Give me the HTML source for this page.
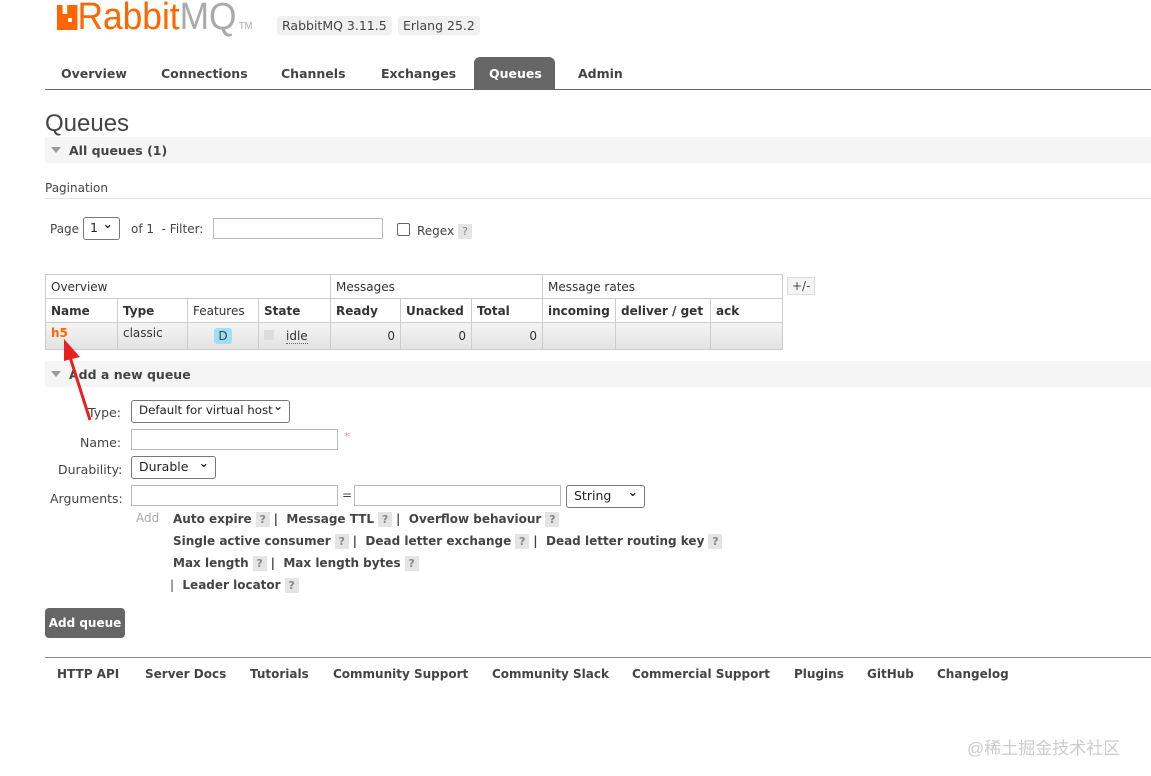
<!DOCTYPE html>
<html><head><meta charset="utf-8"><style>
*{margin:0;padding:0;box-sizing:border-box}
body{width:1151px;height:776px;background:#fff;font-family:"DejaVu Sans","Liberation Sans",sans-serif;font-size:12px;color:#444;position:relative;overflow:hidden}
.a{position:absolute;white-space:nowrap}
.b{font-weight:bold}
.tag{background:#f0f0f0;border-radius:3px;padding:2px 5px;font-size:12.5px;color:#444}
.nav{font-weight:bold;font-size:12.5px;color:#444}
.hl{position:absolute;height:1px;background:#ccc}
.sec{position:absolute;left:45px;width:1106px;height:26px;background:#f5f5f5}
.tri{display:inline-block;width:0;height:0;border-left:5px solid transparent;border-right:5px solid transparent;border-top:6px solid #999;margin-right:8px;vertical-align:2px}
table{border-collapse:collapse;position:absolute;left:45px;top:274px;font-size:12px;table-layout:fixed;width:737px}
td{border:1px solid #ccc;height:24px;padding:0 5px;color:#333;white-space:nowrap;overflow:hidden}
.q{display:inline-block;width:14px;height:15px;background:#e4e4e4;color:#888;font-size:11px;text-align:center;line-height:15px;margin:0 4px}
input.t{position:absolute;height:21px;border:1px solid #bbb;background:#fff}
.sel{position:absolute;border:1px solid #777;border-radius:3px;background:#fff;height:23px;font-size:12.5px;padding:2px 7px;color:#222;white-space:nowrap;overflow:hidden}
.sel:after{content:"⌄";position:absolute;right:6px;top:-2px;font-weight:bold}
.f{font-weight:bold;font-size:12.5px;color:#444}
</style></head><body>
<div class="a" style="left:57px;top:0px;font-family:'Liberation Sans',sans-serif;font-size:38px;color:#f60;line-height:34px;transform:scaleX(0.93);transform-origin:left">
<span style="display:inline-block;width:22px;height:25px;background:#f60;vertical-align:-1px;position:relative"><span style="position:absolute;left:6px;top:0;width:5px;height:9px;background:#fff"></span><span style="position:absolute;left:12px;top:13px;width:4px;height:4px;background:#fff"></span></span>Rabbit<span style="color:#aaa">MQ</span><span style="font-size:10px;color:#aaa"> TM</span></div>
<div class="a tag" style="left:277px;top:16px">RabbitMQ 3.11.5</div>
<div class="a tag" style="left:398px;top:16px">Erlang 25.2</div>
<div class="a nav" style="left:61px;top:66px">Overview</div>
<div class="a nav" style="left:161px;top:66px">Connections</div>
<div class="a nav" style="left:281px;top:66px">Channels</div>
<div class="a nav" style="left:381px;top:66px">Exchanges</div>
<div class="a" style="left:474px;top:57px;width:81px;height:32px;background:#666;border-radius:6px 6px 0 0"></div>
<div class="a nav" style="left:489px;top:66px;color:#fff">Queues</div>
<div class="a nav" style="left:578px;top:66px">Admin</div>
<div class="hl" style="left:45px;top:89px;width:1106px;background:#666"></div>
<div class="a" style="left:45px;top:110px;font-size:24px;color:#444;font-family:'Liberation Sans',sans-serif">Queues</div>
<div class="sec" style="top:137px"></div>
<div class="a b" style="left:51px;top:143px;font-size:12.5px"><span class="tri"></span>All queues (1)</div>
<div class="a" style="left:45px;top:181px">Pagination</div>
<div class="hl" style="left:45px;top:198px;width:1106px;background:#e4e4e4"></div>
<div class="a" style="left:50px;top:222px">Page</div>
<div class="sel" style="left:83px;top:217px;width:37px;padding:2px 6px">1</div>
<div class="a" style="left:131px;top:222px">of 1 &nbsp;- Filter:</div>
<input class="t" style="left:213px;top:218px;width:170px">
<div class="a" style="left:397px;top:223px;width:13px;height:13px;border:1px solid #666;border-radius:2px"></div>
<div class="a" style="left:417px;top:224px">Regex<span class="q">?</span></div>
<table>
<colgroup><col style="width:72px"><col style="width:70px"><col style="width:71px"><col style="width:72px"><col style="width:70px"><col style="width:71px"><col style="width:71px"><col style="width:73px"><col style="width:95px"><col style="width:72px"></colgroup>
<tr><td colspan="4">Overview</td><td colspan="3">Messages</td><td colspan="3">Message rates</td></tr>
<tr style="font-weight:bold"><td style="font-weight:bold">Name</td><td style="font-weight:bold">Type</td><td style="font-weight:normal">Features</td><td style="font-weight:bold">State</td><td style="font-weight:bold">Ready</td><td style="font-weight:bold">Unacked</td><td style="font-weight:bold">Total</td><td style="font-weight:bold">incoming</td><td style="font-weight:bold">deliver / get</td><td style="font-weight:bold">ack</td></tr>
<tr style="background:linear-gradient(#f4f4f4,#e2e2e2);height:27px"><td style="color:#f60;font-weight:bold;vertical-align:top;padding-top:3px">h5</td><td style="vertical-align:top;padding-top:3px">classic</td><td style="text-align:center"><span style="background:#9de0f5;border-radius:3px;padding:1px 4px;color:#444">D</span></td><td><span style="display:inline-block;width:10px;height:10px;background:#ddd;margin-right:12px"></span><span style="border-bottom:1px dotted #666">idle</span></td><td style="text-align:right">0</td><td style="text-align:right">0</td><td style="text-align:right">0</td><td></td><td></td><td></td></tr>
</table>
<div class="a" style="left:787px;top:277px;border:1px solid #ddd;padding:1px 4px;background:#f4f4f4">+/-</div>
<div class="sec" style="top:361px"></div>
<div class="a b" style="left:51px;top:367px;font-size:12.5px"><span class="tri"></span>Add a new queue</div>
<svg class="a" style="left:60px;top:335px" width="40" height="90"><line x1="30" y1="85" x2="10" y2="22" stroke="#e82020" stroke-width="3"/><polygon points="4,4 20,22 4,26" fill="#e82020"/></svg>
<div class="a" style="left:88px;top:405px;font-size:12.5px">Type:</div>
<div class="sel" style="left:131px;top:400px;width:159px;font-size:11.8px">Default for virtual host</div>
<div class="a" style="left:80px;top:435px;font-size:12.5px">Name:</div>
<input class="t" style="left:131px;top:429px;width:207px">
<div class="a" style="left:344px;top:430px;color:#e88;font-size:11px">*</div>
<div class="a" style="left:58px;top:462px;font-size:12.5px">Durability:</div>
<div class="sel" style="left:131px;top:456px;width:85px">Durable</div>
<div class="a" style="left:50px;top:491px;font-size:12.5px">Arguments:</div>
<input class="t" style="left:131px;top:485px;width:207px">
<div class="a" style="left:342px;top:488px">=</div>
<input class="t" style="left:354px;top:485px;width:207px">
<div class="sel" style="left:566px;top:485px;width:79px">String</div>
<div class="a" style="left:136px;top:511px;color:#aaa">Add</div>
<div class="a f" style="left:173px;top:512px;font-size:12px">Auto expire<span class="q">?</span>| &nbsp;Message TTL<span class="q">?</span>| &nbsp;Overflow behaviour<span class="q">?</span></div>
<div class="a f" style="left:173px;top:534px;font-size:12px">Single active consumer<span class="q">?</span>| &nbsp;Dead letter exchange<span class="q">?</span>| &nbsp;Dead letter routing key<span class="q">?</span></div>
<div class="a f" style="left:173px;top:556px;font-size:12px">Max length<span class="q">?</span>| &nbsp;Max length bytes<span class="q">?</span></div>
<div class="a f" style="left:170px;top:578px;font-size:12px"><span style="font-weight:normal">|</span> &nbsp;Leader locator<span class="q">?</span></div>
<div class="a" style="left:45px;top:608px;width:80px;height:30px;background:#666;border-radius:4px;color:#fff;font-weight:bold;font-size:12px;line-height:30px;text-align:center">Add queue</div>
<div class="hl" style="left:45px;top:657px;width:1106px;background:#888"></div>
<div class="a nav" style="left:57px;top:667px;font-size:12px">HTTP API</div>
<div class="a nav" style="left:145px;top:667px;font-size:12px">Server Docs</div>
<div class="a nav" style="left:250px;top:667px;font-size:12px">Tutorials</div>
<div class="a nav" style="left:333px;top:667px;font-size:12px">Community Support</div>
<div class="a nav" style="left:492px;top:667px;font-size:12px">Community Slack</div>
<div class="a nav" style="left:632px;top:667px;font-size:12px">Commercial Support</div>
<div class="a nav" style="left:794px;top:667px;font-size:12px">Plugins</div>
<div class="a nav" style="left:867px;top:667px;font-size:12px">GitHub</div>
<div class="a nav" style="left:937px;top:667px;font-size:12px">Changelog</div>
<div class="a" style="left:967px;top:734px;font-size:17px;color:#ccc;font-family:'Liberation Sans','Noto Sans CJK SC',sans-serif">@稀土掘金技术社区</div>
</body></html>
